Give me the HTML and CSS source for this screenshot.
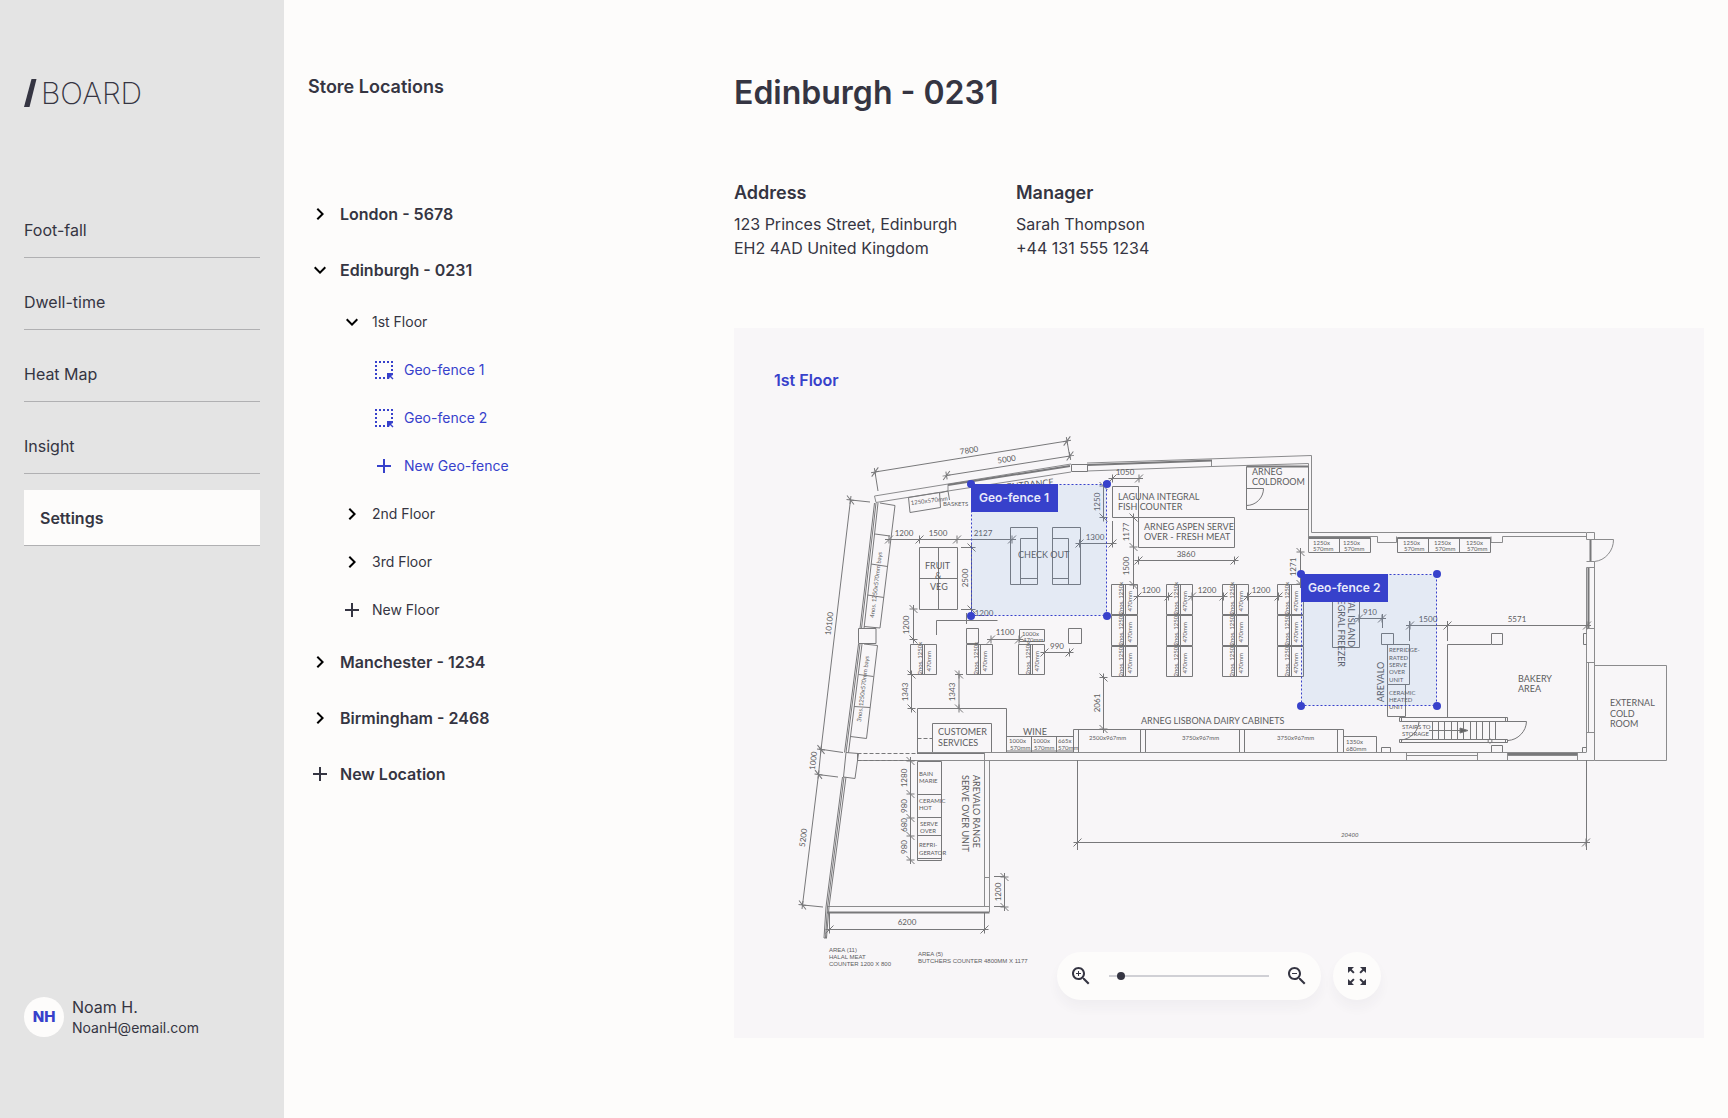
FILE: index.html
```html
<!DOCTYPE html>
<html lang="en">
<head>
<meta charset="utf-8">
<meta name="viewport" content="width=device-width, initial-scale=1">
<title>Edinburgh - 0231 | Board</title>
<link rel="stylesheet" href="styles.css">
</head>
<body>
<svg class="defs" aria-hidden="true">
  <symbol id="i-right" viewBox="0 0 24 24"><path d="M10 6L8.59 7.41 13.17 12l-4.58 4.59L10 18l6-6z"/></symbol>
  <symbol id="i-down" viewBox="0 0 24 24"><path d="M16.59 8.59L12 13.17 7.41 8.59 6 10l6 6 6-6z"/></symbol>
  <symbol id="i-plus" viewBox="0 0 24 24"><path d="M19 13h-6v6h-2v-6H5v-2h6V5h2v6h6z"/></symbol>
  <symbol id="i-fence" viewBox="0 0 24 24"><path d="M3 3h2v2H3zM7 3h2v2H7zM11 3h2v2h-2zM15 3h2v2h-2zM19 3h2v2h-2zM3 7h2v2H3zM3 11h2v2H3zM3 15h2v2H3zM3 19h2v2H3zM7 19h2v2H7zM11 19h2v2h-2zM19 7h2v2h-2zM19 11h2v2h-2zM15 15H21V17L19 18 21.500 20.500 20.500 21.500 18 19 17 21H15Z"/></symbol>
</svg>
<div class="app">
  <aside class="sidebar">
    <a class="logo" href="#" aria-label="Board">
      <svg width="13" height="28" viewBox="0 0 13 28" aria-hidden="true"><path d="M7.500 0h5L5.500 28H0z"/></svg>
      <span>BOARD</span>
    </a>
    <nav class="nav">
      <a href="#">Foot-fall</a>
      <a href="#">Dwell-time</a>
      <a href="#">Heat Map</a>
      <a href="#">Insight</a>
      <a class="active" href="#">Settings</a>
    </nav>
    <div class="user">
      <span class="avatar">NH</span>
      <div>
        <p class="user-name">Noam H.</p>
        <p class="user-mail">NoanH@email.com</p>
      </div>
    </div>
  </aside>

  <section class="locations">
    <h2>Store Locations</h2>
    <ul class="tree">
      <li><button><svg class="icon black"><use href="#i-right"/></svg>London - 5678</button></li>
      <li><button><svg class="icon black"><use href="#i-down"/></svg>Edinburgh - 0231</button>
        <ul>
          <li><button><svg class="icon black"><use href="#i-down"/></svg>1st Floor</button>
            <ul class="fences">
              <li><button><svg class="icon"><use href="#i-fence"/></svg>Geo-fence 1</button></li>
              <li><button><svg class="icon"><use href="#i-fence"/></svg>Geo-fence 2</button></li>
              <li><button><svg class="icon"><use href="#i-plus"/></svg>New Geo-fence</button></li>
            </ul>
          </li>
          <li><button><svg class="icon black"><use href="#i-right"/></svg>2nd Floor</button></li>
          <li><button><svg class="icon black"><use href="#i-right"/></svg>3rd Floor</button></li>
          <li><button><svg class="icon"><use href="#i-plus"/></svg>New Floor</button></li>
        </ul>
      </li>
      <li><button><svg class="icon black"><use href="#i-right"/></svg>Manchester - 1234</button></li>
      <li><button><svg class="icon black"><use href="#i-right"/></svg>Birmingham - 2468</button></li>
      <li><button><svg class="icon"><use href="#i-plus"/></svg>New Location</button></li>
    </ul>
  </section>

  <main class="store">
    <h1>Edinburgh - 0231</h1>
    <div class="details">
      <section>
        <h2>Address</h2>
        <p>123 Princes Street, Edinburgh<br>EH2 4AD United Kingdom</p>
      </section>
      <section>
        <h2>Manager</h2>
        <p>Sarah Thompson<br>+44 131 555 1234</p>
      </section>
    </div>

    <section class="floor">
      <h3>1st Floor</h3>
      <svg class="plan" viewBox="734 400 970 580" role="img" aria-label="Plan of the 1st floor">
        <defs>
          <marker id="tick" viewBox="-6 -6 12 12" markerWidth="12" markerHeight="12" markerUnits="userSpaceOnUse" orient="auto"><path class="tick" d="M0-4V4M-4 4L4-4M-4 0H4"/></marker>
          <g id="bay"><path d="M0 0H26V30H0ZM12 0V30M14 0V30"/><text class="tiny" transform="translate(11 30) rotate(-90)">2nos. 1250x</text><text class="tiny" transform="translate(20 27) rotate(-90)">470mm</text></g>
          <g id="stack"><use href="#bay"/><use href="#bay" y="31"/><use href="#bay" y="62"/><path d="M0 30.500H26M0 61.500H26"/></g>
        </defs>

        <!-- Outer walls -->
        <g class="wall">
          <path d="M874.500 496L1071 464M876 502.500L948 491L1071 472M874.500 496L876 502.500M948 484V491M1087 463L1311.500 455.500V532.500H1586M1087 471L1212 466.500L1308.500 463.500V552M1211.500 460V467"/>
          <path d="M1308.500 536.500H1377.500V542.500H1396.500V536.500M1491 536.500V542.500H1502.500V536.500H1586"/>
          <path d="M1586.500 532.500H1594.500V539.500H1586.500ZM1590.500 539.500H1613.500A21 22 0 0 1 1594.500 561.500M1586.500 561.500H1594.500V567.500H1586.500V628.500H1594.500V662.500H1586.500V628.500M1594.500 567V760.500M1588.500 662V732M1586.500 662V752M1586.500 732.500H1594.500"/>
          <path d="M917 752.500H1586.500M858 760.500H1594.500M984.500 753V906.500M989.500 761V912M984.500 877.500H989.500M827 906.500H989M1406.500 753V760M1477.500 753V760M1507.500 753V760M1577.500 753V760M1406 755.500H1477M1507 755.500H1577"/>
          <path d="M1594.500 665.500H1666.500V760.500H1594.500"/>
        </g>
        <g class="line">
          <path d="M1071.500 464.500H1087.500V471.500H1071.500ZM858.500 628.500H876V643.500H858.500ZM846 752.500L858.500 753.500L855 778.500L843.500 777Z"/>
          <path d="M874.500 503L860 628.500M878 503L864 628.500M858.500 644L844.500 752.500M862 644L848.500 752.500M842.500 777L826 907L824 938M846 777L829 907L826.500 938M824 938H827"/>
          <path d="M880 503L895 505.500L880 628L864 626.500M875 534L890 536M871 564L887.500 566.500M867.500 595L884 597.500M864 644L877.500 645.500L866.500 738.500L850.500 736.500M858.500 674.500L873.500 676.500M854 706.500L870 707.500"/>
          <path d="M908.500 497.500L939.500 492.500L940.500 507.500L910 512.500ZM939.500 493L948 491L949.500 500"/>
        </g>
        <g class="heavy">
          <path d="M948 485L1070 466M1087 465L1212 460.500M827 912.500H989.500M1590.500 540V561M1588.500 568V628M1508 754H1577M1247 466.500H1308"/>
        </g>
        <g class="line">
          <path d="M876 503L861.500 628.500M860 644L846 752.500M844 777L827.500 907L825.500 938M1309 538.500H1370M1397 538.500H1491"/>
          <path class="dash" d="M857.500 753.500H917M857.500 760.500H917"/>
        </g>

        <!-- Fixtures -->
        <g class="line">
          <path d="M1308.500 537.500H1370.500V552.500H1308.500M1339.500 538V552M1397.500 537.500H1490.500V552.500H1397.500ZM1428.500 538V552M1459.500 538V552"/>
          <path d="M1246.500 466.500H1308.500V509.500H1246.500ZM1246.500 488.500H1263.500A17 17 0 0 1 1246.500 505.500M1112.500 486.500H1138.500V517.500H1112.500ZM1138.500 517.500H1234.500V547.500H1138.500Z"/>
          <path d="M1010.500 527.500H1037.500V584.500H1010.500ZM1037.500 538.500H1020.500V584.500M1020.500 578.500H1037.500M1052.500 527.500H1080.500V584.500H1052.500ZM1052.500 538.500H1068.500V584.500M1052.500 578.500H1068.500"/>
          <path d="M919.500 547.500H957.500V609.500H919.500ZM938.500 547.500V609.500M919.500 578.500H957.500M966.500 628.500H978.500V643.500H966.500ZM1019.500 629.500H1044.500V641.500H1019.500ZM1068.500 628.500H1081.500V643.500H1068.500Z"/>
          <path d="M917.500 753V708.500H1006.500V752M932.500 752V723.500H991.500V752M1006.500 736.500H1073.500M1006.500 751H1073.500M1031.500 737V752M1056.500 737V752M1073.500 752V729.500H1343.500V752M1078.500 729V752M1140.500 729V752M1145.500 729V752M1239.500 729V752M1244.500 729V752M1337.500 729V752M1343.500 736.500H1376.500V752M857.500 753V761M917 753.500H984"/>
          <path class="dash" d="M917.500 738.500H932.500"/>
          <path d="M917.500 761.500H941.500V860.500H917.500ZM917.500 794.500H941.500M917.500 817.500H941.500M917.500 835.500H941.500M917.500 858.500H941.500"/>
          <path d="M1332.500 590V647.500H1359.500V590M1381.500 633.500H1393.500V644.500H1381.500ZM1491.500 633.500H1502.500V644.500H1491.500ZM1586.500 633.500H1583.500V644.500H1586.500M1447.500 718V644.500H1491M1387.500 644.500H1409.500V684.500H1387.500ZM1405.500 684.500V716.500H1387.500V684.500"/>
          <path d="M1381.500 752V747.500H1390.500V752M1491.500 752V745.500H1502.500V752M1582.500 752V747.500H1586.500"/>
          <path d="M1399.500 717.500H1507.500V721.500H1399.500ZM1399.500 739.500H1507.500V742.500H1399.500ZM1401.500 717.500V721.500M1505.500 717.500V721.500M1401.500 739.500V742.500M1505.500 739.500V742.500M1432.500 722V739M1438.500 722V739M1444.500 722V739M1451.500 722V739M1457.500 722V739M1463.500 722V739M1470.500 722V739M1476.500 722V739M1482.500 722V739M1489.500 722V739M1495.500 722V739M1429 730.500H1462M1507 721.500H1526.500A20 20 0 0 1 1508 740.500M1419 722A20 20 0 0 1 1401 740"/>
          <circle cx="1490" cy="741" r="2"/>
          <path class="solid" d="M1460 728L1468 730.500L1460 733Z"/>
          <use href="#bay" x="910.500" y="644.500"/><use href="#bay" x="966.500" y="644.500"/><use href="#bay" x="1018.500" y="644.500"/>
          <use href="#stack" x="1111.500" y="584.500"/><use href="#stack" x="1166.500" y="584.500"/><use href="#stack" x="1222.500" y="584.500"/><use href="#stack" x="1277.500" y="584.500"/>
        </g>

        <!-- Dimension lines -->
        <g class="line" marker-start="url(#tick)" marker-mid="url(#tick)" marker-end="url(#tick)">
          <path d="M875 472L1067 441"/><path d="M946.500 475.500L1070 456"/>
          <path d="M850.500 500L821 749.500L818.500 774.500L802.500 905"/>
          <path d="M889 539.500H919.500H957H1012"/><path d="M971.500 547.500V609.500"/><path d="M913.500 609V639.500"/>
          <path d="M991 639.500H1019"/><path d="M1044.500 652.500H1069.500"/><path d="M1103.500 486V517.500"/><path d="M1079.500 543.500H1112.500"/>
          <path d="M1112.500 478.500H1139"/><path d="M1138.500 560.500H1234.500"/><path d="M1133.500 517.500V547V585"/><path d="M1300.500 552V584"/>
          <path d="M1137.500 596.500H1168.500"/><path d="M1192 596.500H1223.500"/><path d="M1247.500 596.500H1278.500"/>
          <path d="M911.500 674.500V708.500"/><path d="M959 674.500V708.500"/><path d="M1103.500 677.500V729"/>
          <path d="M910.500 761V794V818V836V860"/><path d="M1004.500 877V907"/><path d="M829.500 929.500H984.500"/><path d="M1077.500 842.500H1586"/>
          <path d="M1359 618.500H1382"/><path d="M1410 625.500H1447.500H1587"/>
        </g>
        <g class="line">
          <path d="M875 472L878 491M1067 441L1070 458M851 500L870 502M819 749L843 752.500M818 774.500L838 777M803 905L823 907M961 547.500H975M961 609.500H975M936.500 635V620.500H997.500M966.500 613V624M1112.500 521V543M1382.500 614V628M1409.500 621V641M1447.500 621V641M1077.500 760V850M1586.500 760V850M829.500 913V930M984.500 913V930M994 876.500H1004M994 906.500H1004"/>
        </g>

        <!-- Dimensions -->
        <g class="dim">
          <text transform="translate(969.500 453) rotate(-9)">7800</text><text transform="translate(1007 462) rotate(-9)">5000</text>
          <text transform="translate(832 624) rotate(-83)">10100</text><text transform="translate(816 761) rotate(-83)">1000</text><text transform="translate(806 838) rotate(-83)">5200</text>
          <text x="904" y="536">1200</text><text x="938" y="536">1500</text><text x="983" y="536">2127</text>
          <text transform="translate(968 578) rotate(-90)">2500</text><text transform="translate(909 625) rotate(-90)">1200</text>
          <text x="984" y="616">1200</text><text x="1005" y="635">1100</text><text x="1057" y="649">990</text>
          <text transform="translate(1100 502) rotate(-90)">1250</text><text x="1095" y="540">1300</text><text x="1125" y="475">1050</text>
          <text transform="translate(1129 532) rotate(-90)">1177</text><text transform="translate(1129 566) rotate(-90)">1500</text>
          <text x="1186" y="557">3860</text><text transform="translate(1296 567) rotate(-90)">1271</text>
          <text x="1151" y="593">1200</text><text x="1207" y="593">1200</text><text x="1261" y="593">1200</text>
          <text transform="translate(908 692) rotate(-90)">1343</text><text transform="translate(955 692) rotate(-90)">1343</text><text transform="translate(1100 703) rotate(-90)">2061</text>
          <text transform="translate(907 778) rotate(-90)">1280</text><text transform="translate(907 806) rotate(-90)">980</text><text transform="translate(907 825) rotate(-90)">680</text><text transform="translate(907 847) rotate(-90)">980</text>
          <text transform="translate(1001 892) rotate(-90)">1200</text><text x="907" y="925">6200</text>
          <text x="1370" y="615">910</text><text x="1428" y="622">1500</text><text x="1517" y="622">5571</text>
        </g>

        <!-- Area names -->
        <g class="name">
          <text text-anchor="end" transform="translate(1054 485) rotate(-6)">ENTRANCE</text>
          <text x="1018" y="558">CHECK OUT</text>
          <text x="925" y="569">FRUIT</text><text x="935" y="579">&amp;</text><text x="930" y="590">VEG</text>
          <text x="1252" y="475">ARNEG</text><text x="1252" y="485">COLDROOM</text>
          <text x="1118" y="500">LAGUNA INTEGRAL</text><text x="1118" y="510">FISH COUNTER</text>
          <text x="1144" y="530">ARNEG ASPEN SERVE</text><text x="1144" y="540">OVER - FRESH MEAT</text>
          <text x="938" y="735">CUSTOMER</text><text x="938" y="746">SERVICES</text><text x="1023" y="735">WINE</text>
          <text x="1141" y="724">ARNEG LISBONA DAIRY CABINETS</text>
          <text transform="translate(973 775) rotate(90)">AREVALO RANGE</text><text transform="translate(962 775) rotate(90)">SERVE OVER UNIT</text>
          <text text-anchor="end" transform="translate(1348 647) rotate(90)">OVAL ISLAND</text><text text-anchor="end" transform="translate(1338 667) rotate(90)">INTEGRAL FREEZER</text>
          <text transform="translate(1384 702) rotate(-90)">AREVALO</text>
          <text x="1518" y="682">BAKERY</text><text x="1518" y="692">AREA</text>
          <text x="1610" y="706">EXTERNAL</text><text x="1610" y="717">COLD</text><text x="1610" y="727">ROOM</text>
        </g>
        <g class="tiny">
          <text transform="translate(911 505) rotate(-7)">1250x570mm</text><text x="943" y="506">BASKETS</text>
          <text transform="translate(874 618) rotate(-83)">4nos. 1250x570mm bays</text><text transform="translate(861 722) rotate(-83)">3nos. 1250x570mm bays</text>
          <text x="1022" y="636">1000x</text><text x="1023" y="642">470mm</text>
          <text x="1313" y="545">1250x</text><text x="1313" y="551">570mm</text><text x="1343" y="545">1250x</text><text x="1344" y="551">570mm</text>
          <text x="1403" y="545">1250x</text><text x="1404" y="551">570mm</text><text x="1434" y="545">1250x</text><text x="1435" y="551">570mm</text><text x="1466" y="545">1250x</text><text x="1467" y="551">570mm</text>
          <text x="1009" y="743">1000x</text><text x="1010" y="750">570mm</text><text x="1033" y="743">1000x</text><text x="1034" y="750">570mm</text><text x="1058" y="743">665x</text><text x="1058" y="750">570mm</text>
          <text x="1089" y="740">2500x967mm</text><text x="1182" y="740">3750x967mm</text><text x="1277" y="740">3750x967mm</text>
          <text x="1346" y="744">1350x</text><text x="1346" y="751">680mm</text>
          <text x="919" y="776">BAIN</text><text x="919" y="783">MARIE</text><text x="919" y="803">CERAMIC</text><text x="919" y="810">HOT</text><text x="920" y="826">SERVE</text><text x="920" y="833">OVER</text><text x="919" y="847">REFRI-</text><text x="919" y="855">GERATOR</text>
          <text x="1389" y="652">REFRIDGE-</text><text x="1389" y="660">RATED</text><text x="1389" y="667">SERVE</text><text x="1389" y="674">OVER</text><text x="1389" y="682">UNIT</text>
          <text x="1389" y="695">CERAMIC</text><text x="1389" y="702">HEATED</text><text x="1389" y="709">UNIT</text>
          <text x="1402" y="729">STAIRS TO</text><text x="1402" y="736">STORAGE</text>
          <text class="slanted" x="1341" y="837">20400</text>
        </g>
        <g class="tiny note">
          <text x="829" y="952">AREA (11)</text><text x="829" y="959">HALAL MEAT</text><text x="829" y="966">COUNTER 1200 X 800</text>
          <text x="918" y="956">AREA (5)</text><text x="918" y="963">BUTCHERS COUNTER 4800MM X 1177</text>
        </g>

        <!-- Geo-fences -->
        <g class="fence" transform="translate(971 484)">
          <rect class="zone" x="0.500" y="0.500" width="135" height="131"/>
          <circle r="4"/><circle cx="136" r="4"/><circle cy="132" r="4"/><circle cx="136" cy="132" r="4"/>
          <rect width="87" height="28"/><text x="8" y="18">Geo-fence 1</text>
        </g>
        <g class="fence" transform="translate(1301 574)">
          <rect class="zone" x="0.500" y="0.500" width="135" height="131"/>
          <circle r="4"/><circle cx="136" r="4"/><circle cy="132" r="4"/><circle cx="136" cy="132" r="4"/>
          <rect width="87" height="28"/><text x="7" y="18">Geo-fence 2</text>
        </g>
      </svg>

      <div class="controls">
        <div class="zoom">
          <button aria-label="Zoom in"><svg class="icon" viewBox="0 0 24 24"><path d="M15.500 14h-.79l-.28-.27C15.410 12.590 16 11.110 16 9.500 16 5.910 13.090 3 9.500 3S3 5.910 3 9.500 5.910 16 9.500 16c1.610 0 3.090-.59 4.230-1.570l.27.28v.79l5 4.990L20.490 19l-4.990-5zm-6 0C7.010 14 5 11.990 5 9.500S7.010 5 9.500 5 14 7.010 14 9.500 11.990 14 9.500 14zM12 10h-2v2H9v-2H7V9h2V7h1v2h2z"/></svg></button>
          <input type="range" min="0" max="100" value="5" aria-label="Zoom level">
          <button aria-label="Zoom out"><svg class="icon" viewBox="0 0 24 24"><path d="M15.500 14h-.79l-.28-.27C15.410 12.590 16 11.110 16 9.500 16 5.910 13.090 3 9.500 3S3 5.910 3 9.500 5.910 16 9.500 16c1.610 0 3.090-.59 4.230-1.570l.27.28v.79l5 4.990L20.490 19l-4.990-5zm-6 0C7.010 14 5 11.990 5 9.500S7.010 5 9.500 5 14 7.010 14 9.500 11.990 14 9.500 14zM7 9h5v1H7z"/></svg></button>
        </div>
        <button class="expand" aria-label="Full screen"><svg class="icon" viewBox="0 0 24 24"><path d="M15 3l2.300 2.300-2.890 2.870 1.420 1.420L18.700 6.700 21 9V3zM3 9l2.300-2.300 2.870 2.890 1.420-1.420L6.700 5.300 9 3H3zM9 21l-2.300-2.300 2.890-2.870-1.420-1.420L5.300 17.300 3 15v6zM21 15l-2.300 2.300-2.870-2.890-1.420 1.420 2.890 2.870L15 21h6z"/></svg></button>
      </div>
    </section>
  </main>
</div>
</body>
</html>
```
FILE: styles.css
```css
:root {
  --ink: #353542;
  --blue: #3741cb;
  --paper: #fdfcfb;
}

* { box-sizing: border-box; }

body {
  margin: 0;
  background: var(--paper);
  color: var(--ink);
  font: 16px/24px Inter, sans-serif;
}

h1, h2, h3, p, ul { margin: 0; padding: 0; }
ul { list-style: none; }

button {
  padding: 0;
  border: 0;
  background: none;
  color: inherit;
  font: inherit;
  cursor: pointer;
}

h2 { font-size: 18px; font-weight: 600; line-height: 24px; }

.defs { display: none; }
.icon { display: block; flex: none; width: 24px; height: 24px; fill: currentColor; }
.icon.black { fill: #000; }

.app {
  display: grid;
  grid-template-columns: 284px 426px 1fr;
  min-height: 100vh;
}

/* Sidebar */
.sidebar {
  display: flex;
  flex-direction: column;
  padding: 72px 24px 80px;
  background: #e4e4e4;
}

.logo {
  display: flex;
  align-items: center;
  gap: 4px;
  height: 42px;
  color: inherit;
  font-size: 30px;
  font-weight: 200;
  text-decoration: none;
}
.logo svg { fill: currentColor; }

.nav {
  display: flex;
  flex-direction: column;
  gap: 16px;
  margin-top: 88px;
}
.nav a {
  height: 56px;
  border-bottom: 1px solid #b0b0b2;
  color: inherit;
  line-height: 56px;
  text-decoration: none;
}
.nav .active {
  padding-left: 16px;
  background: var(--paper);
  font-weight: 600;
}

.user {
  display: flex;
  align-items: center;
  gap: 8px;
  margin-top: auto;
}
.avatar {
  width: 40px;
  height: 40px;
  border-radius: 50%;
  background: var(--paper);
  color: var(--blue);
  font-size: 15px;
  font-weight: 800;
  line-height: 40px;
  text-align: center;
}
.user-name { line-height: 22px; }
.user-mail { font-size: 14px; line-height: 20px; }

/* Location tree */
.locations { padding: 75px 24px 80px; }
.tree { margin-top: 87px; font-weight: 600; }
.tree button {
  display: flex;
  align-items: center;
  gap: 8px;
  width: 100%;
  height: 56px;
  text-align: left;
}
.tree ul { padding-left: 32px; font-size: 14px; font-weight: 400; }
.tree ul button { height: 48px; }
.tree .fences { color: var(--blue); }

/* Store */
.store { padding: 73px 24px 80px; }
h1 { font-size: 32px; font-weight: 600; line-height: 40px; }
.details {
  display: grid;
  grid-template-columns: 258px 258px;
  gap: 24px;
  margin-top: 68px;
}
.details p { margin-top: 7px; }

.floor {
  position: relative;
  margin-top: 68px;
  padding: 40px 0 58px;
  background: #f8f6f8;
}
h3 {
  padding-left: 40px;
  color: var(--blue);
  font-size: 16px;
  font-weight: 600;
  line-height: 24px;
}

/* Floor plan */
.plan { display: block; width: 100%; margin-top: 8px; font-family: Lato, sans-serif; }
.plan text { fill: #5c5c5e; stroke: none; }
.wall, .line, .heavy { fill: none; stroke: #78787a; }
.wall { stroke: #8b8b8d; }
.heavy { stroke-width: 2px; }
.tick { fill: none; stroke: #78787a; }
.dash { stroke-dasharray: 4 2; }
.solid { fill: #626264; }
.plan .dim { font-size: 8px; text-anchor: middle; }
.plan .name { font-size: 9px; }
.plan .tiny { font-size: 6px; }
.plan .note { font-family: "Liberation Sans", sans-serif; }
.slanted { font-style: italic; }

.fence { fill: var(--blue); }
.plan .fence text {
  fill: #e9eafa;
  font-family: Inter, sans-serif;
  font-size: 12px;
  font-weight: 600;
}
.fence .zone {
  fill: rgba(88, 150, 220, .12);
  stroke: var(--blue);
  stroke-dasharray: 2 2;
}

/* Map controls */
.controls {
  position: absolute;
  right: 0;
  bottom: 38px;
  left: 0;
  display: flex;
  justify-content: center;
  gap: 12px;
}
.zoom, .expand {
  height: 48px;
  border-radius: 24px;
  background: var(--paper);
  box-shadow: 0 8px 12px rgba(53, 53, 66, .04);
}
.zoom {
  display: flex;
  align-items: center;
  gap: 16px;
  width: 264px;
  padding: 0 12px;
}
.expand { width: 48px; padding: 0 12px; }

input[type="range"] {
  flex: 1;
  min-width: 0;
  height: 8px;
  margin: 0;
  background: linear-gradient(#d0d0d5, #d0d0d5) center / 100% 2px no-repeat;
  appearance: none;
}
input[type="range"]::-webkit-slider-thumb {
  width: 8px;
  height: 8px;
  border-radius: 50%;
  background: var(--ink);
  appearance: none;
}
```
